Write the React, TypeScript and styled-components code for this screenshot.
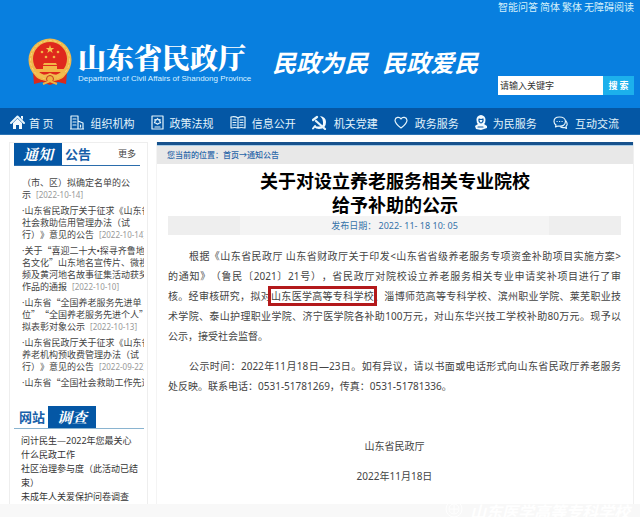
import React from "react";
import styled, { createGlobalStyle, css } from "styled-components";

const sans = `"Noto Sans", "Noto Sans CJK SC", sans-serif`;
const cjk = `"Noto Sans CJK SC", sans-serif`;

const GlobalStyle = createGlobalStyle`
  * { box-sizing: border-box; }
  body { margin: 0; background: #fff; color: #444; font-family: ${sans}; text-spacing-trim: space-all; }
  h1, h2, p, ul { margin: 0; padding: 0; }
  ul { list-style: none; }
  a { color: inherit; text-decoration: none; }
`;

const Page = styled.div`
  min-height: 100vh;
  display: flex;
  flex-direction: column;
  overflow: hidden;
`;

const Header = styled.header`
  background: #087fdf;
`;

const TopLinks = styled.nav`
  display: flex;
  justify-content: flex-end;
  gap: 2px;
  padding: 0 6px;
  font: 10px/14px ${cjk};
  color: #d4f0fb;
`;

const BrandRow = styled.div`
  display: flex;
  align-items: center;
  min-height: 94px;
  padding: 14px 6px 13px 28px;
`;

const Brand = styled.a`
  display: flex;
  align-items: center;
  gap: 6px;
`;

const BrandText = styled.div`
  padding-top: 3px;
  color: #fff;
  white-space: nowrap;
`;

const BrandName = styled.div`
  font: 900 28px/32px "Noto Serif CJK SC", "Noto Sans CJK SC", serif;
`;

const BrandEnglish = styled.div`
  font: 8px/12px "Liberation Sans", sans-serif;
  color: #d9f1ff;
`;

const Slogan = styled.div`
  display: flex;
  gap: 14px;
  margin-left: 21px;
  font: italic 700 24px/30px ${cjk};
  color: #fff;
  white-space: nowrap;
`;

const Search = styled.form`
  display: flex;
  align-self: flex-end;
  margin-left: auto;
  height: 19px;
`;

const SearchInput = styled.input`
  width: 105px;
  border: 0;
  border-radius: 0;
  padding: 0 2px;
  background: #fff;
  font: 9px ${cjk};
  color: #333;
  &::placeholder { color: #333; opacity: 1; }
`;

const SearchButton = styled.button`
  width: 31px;
  border: 0;
  padding: 0;
  background: #1cb0ec;
  color: #fff;
  font: bold 9px ${cjk};
`;

const MainNav = styled.nav`
  display: flex;
  justify-content: space-between;
  align-items: center;
  min-height: 27px;
  padding: 3px 21px 0 10px;
  background: #0457a5;
  border-bottom: 1px solid #2c74b5;
`;

const NavItem = styled.a<{ $gap: number }>`
  display: flex;
  align-items: center;
  gap: ${(p) => p.$gap}px;
  font: 11px/20px ${cjk};
  color: #e2f3fb;
  white-space: nowrap;
`;

const Columns = styled.div`
  flex: 1;
  display: grid;
  grid-template-columns: 139px minmax(0, 1fr);
  gap: 8px;
  padding: 7px 6px 0 9px;
`;

const Sidebar = styled.aside`
  border: 1px solid #eee;
  border-bottom: 0;
  padding: 0 3px 0 4px;
`;

const PanelHead = styled.div<{ $tone: string; $inset?: boolean }>`
  display: flex;
  align-items: center;
  height: 23px;
  gap: 3px;
  margin-right: ${(p) => (p.$inset ? 0 : 4)}px;
  padding-left: ${(p) => (p.$inset ? 5 : 0)}px;
  border-bottom: 1px solid ${(p) => p.$tone};
`;

const Plate = styled.span`
  align-self: stretch;
  width: 48px;
  background: #0457a5;
  color: #fff;
  font: italic bold 15px/21px "Noto Serif CJK SC", "Noto Sans CJK SC", serif;
  text-align: center;
`;

const PanelWord = styled.span`
  font: bold 13px/22px ${cjk};
  color: #175fa9;
`;

const More = styled.a`
  margin: 0 4px 0 auto;
  font: 9px/20px ${cjk};
  color: #444;
`;

const Notices = styled.ul`
  display: flex;
  flex-direction: column;
  gap: 4px;
  margin: 11px 0 17px;
  padding-left: 8px;
  overflow: hidden;
`;

const Notice = styled.li`
  font: 9px/12px ${cjk};
  white-space: nowrap;
  time {
    margin-left: 3px;
    font: 8px/11px ${sans};
    color: #999;
  }
`;

const Dot = styled.span`
  font-family: ${sans};
  line-height: 1;
`;

const Line = styled.span<{ $justify?: boolean; $indent?: boolean }>`
  display: block;
  ${(p) => p.$justify && css`text-align-last: justify;`}
  ${(p) => p.$indent && css`text-indent: 21px;`}
`;

const Surveys = styled.ul`
  padding: 5px 0 0 7px;
`;

const Survey = styled.li`
  font: 9px/14px ${sans};
  color: #333;
  white-space: nowrap;
`;

const Article = styled.main`
  border-right: 1px solid #f0f0f0;
  border-left: 1px solid #f4f4f4;
`;

const Crumbs = styled.nav`
  border-top: 3px solid #17528d;
  background: #e8e8e8;
  box-shadow: inset 0 1px #a9cde8;
  padding: 0 10px;
  font: 500 8px/19px ${cjk};
  color: #2a66a8;
`;

const Title = styled.h1`
  padding-top: 4px;
  font: bold 18px/24px ${cjk};
  color: #000;
  text-align: center;
`;

const PublishDate = styled.div`
  margin: 0 12px 11px 11px;
  background: linear-gradient(90deg, #eee 16%, #f4f4f4 16% 84%, #eee 84%);
  font: 9px/19px ${sans};
  color: #3472a8;
  text-align: center;
`;

const Body = styled.div`
  display: flex;
  flex-direction: column;
  gap: 10px;
  margin: 0 12px 16px 11px;
  font: 10px/20px ${sans};
`;

const Sign = styled.p<{ $first?: boolean }>`
  margin-top: ${(p) => (p.$first ? 30 : 0)}px;
  text-align: center;
`;

const Highlight = styled.mark`
  background: none;
  color: inherit;
  outline: 3px solid #b3191b;
`;

const Footer = styled.footer`
  display: flex;
  justify-content: flex-end;
  align-items: center;
  gap: 7px;
  height: 14px;
  padding-right: 10px;
  background: #f8f8f8;
  color: #fff;
  font: italic bold 16px/14px ${cjk};
`;

function Emblem() {
  return (
    <svg width="44" height="47" viewBox="0 0 44 47" aria-label="国徽">
      <path d="M5 34 L6 46 L14 44 L22 47 L30 44 L38 46 L39 34Z" fill="#d92a1c" />
      <circle cx="22" cy="22" r="21.5" fill="#efb94c" />
      <circle cx="22" cy="22" r="19.5" fill="none" stroke="#f8d67a" strokeDasharray="3 2" />
      <circle cx="22" cy="21" r="17" fill="#df291d" />
      <path d="M22 7l1 3h3.200l-2.500 2 1 3-2.700-1.900-2.700 1.900 1-3-2.500-2H21z" fill="#f6c751" />
      <g fill="#f3b647">
        <circle cx="14" cy="14" r="1.300" /><circle cx="30" cy="14" r="1.300" />
        <circle cx="18" cy="19" r="1.300" /><circle cx="26" cy="19" r="1.300" />
        <path d="M16 25h12l1 2H15zM15 28h14v3h8l-3 3H10l-3-3h8z" />
      </g>
      <path d="M7 34q8 5 15 1 7 4 15-1l-3 6q-6 0-8-2-4 3-8 0-2 2-8 2z" fill="#f2bd50" />
      <circle cx="22" cy="41" r="3.500" fill="#f0b343" stroke="#c5361e" />
      <path d="M8 38q6 5 10 3M36 38q-6 5-10 3" fill="none" stroke="#f0b343" strokeWidth="1.500" />
      <path d="M15 46l7-3 7 3" fill="none" stroke="#f0b343" strokeWidth="2" />
    </svg>
  );
}

const Glyph = styled.svg`
  flex: none;
  fill: none;
  stroke: #e6f5fc;
  stroke-width: 1.2;
  stroke-linecap: round;
  stroke-linejoin: round;
`;

const solid = { fill: "#f2faff", stroke: "none" };

const navItems = [
  {
    label: "首 页", width: 15, gap: 4,
    icon: <><path d="M1 8l6.500-6.500L14 8" strokeWidth="2" /><path d="M3 8l4.500-4.500L12 8v6H9v-4H6v4H3zM11 1h2v4l-2-2z" {...solid} /></>,
  },
  {
    label: "组织机构", width: 14, gap: 7,
    icon: <path d="M1 1h7v13H1zM8 6l5 2v6H8M3 4h3M3 7h3M3 10h3M10.500 10v2M0 14h14" />,
  },
  {
    label: "政策法规", width: 13, gap: 6,
    icon: <><path d="M1 1h11v13H1zM4 12h5" /><path d="M6.500 3.500l1 1.300 1.600-.2-.3 1.600.8 1.500-1.600.5-1.500 1-1.500-1-1.600-.5.8-1.500-.3-1.600 1.600.2z" /></>,
  },
  {
    label: "信息公开", width: 16, gap: 6,
    icon: <path d="M8 3Q5 1 1 2v11q4-1 7 0 3-1 7 0V2q-4-1-7 1v10M3 5h3M3 7.500h3M3 10h3M10 5h3M10 7.500h3M10 10h3" />,
  },
  {
    label: "机关党建", width: 15, gap: 7,
    icon: <><path d="M8 1q6 1 6 6 0 7-7 7-3 0-5-2l1-1q9 2 8-4-.5-4-3-6z" {...solid} /><path d="M4 6l9 8M1 5l4-3" strokeWidth="2.200" /><path d="M3 11l-2 2.500" strokeWidth="2" /></>,
  },
  {
    label: "政务服务", width: 14, gap: 7,
    icon: <path d="M7 13Q1 8.500 1 5.200A3.200 3.200 0 0 1 7 4a3.200 3.200 0 0 1 6 1.200Q13 8.500 7 13z" />,
  },
  {
    label: "为民服务", width: 12, gap: 6,
    icon: <><path d="M6 0a4.800 4.800 0 0 1 4.500 5q0 3-1.500 4l3 2v2l-6 2-5-1-1-3 3-2q-1.500-1-1.500-4A4.500 4.500 0 0 1 6 0z" {...solid} /><path d="M4 4q2 1 4 0v2q-2 4-4 0zM3 12h5" stroke="#0457a5" /></>,
  },
  {
    label: "互动交流", width: 15, gap: 7,
    icon: <><path d="M6.500 2C3 2 1 4 1 6.500 1 8 2 9.300 3 10l-.5 2L5 11q7 1 7.500-4.500C12.500 4 10 2 6.500 2z" /><path d="M13 6q1.500 2 1 4l-1 1.500.5 2-2-1q-2.500.5-4-.7M4 6.500h.2M6.500 6.500h.2M9 6.500h.2" /></>,
  },
];

const notices: { lines: string[]; date?: string }[] = [
  { lines: ["（市、区）拟确定名单的公", "示"], date: "2022-10-14" },
  { lines: ["·山东省民政厅关于征求《山东省", "社会救助信用管理办法（试", "行）》意见的公告"], date: "2022-10-14" },
  { lines: ["·关于“喜迎二十大•探寻齐鲁地", "名文化”山东地名宣传片、微视", "频及黄河地名故事征集活动获奖", "作品的通报"], date: "2022-10-10" },
  { lines: ["·山东省“全国养老服务先进单", "位”“全国养老服务先进个人”", "拟表彰对象公示"], date: "2022-10-13" },
  { lines: ["·山东省民政厅关于征求《山东省", "养老机构预收费管理办法（试", "行）》意见的公告"], date: "2022-09-22" },
  { lines: ["·山东省“全国社会救助工作先进"] },
];

const surveys = [
  ["问计民生—2022年您最关心", "什么民政工作"],
  ["社区治理参与度（此活动已结", "束）"],
  ["未成年人关爱保护问卷调查"],
];

function NoticeText({ text }: { text: string }) {
  return (
    <>
      {text.split(/([·•])/).map((part, i) =>
        part === "·" || part === "•" ? <Dot key={i}>{part}</Dot> : part,
      )}
    </>
  );
}

export default function App() {
  return (
    <Page lang="zh-CN">
      <GlobalStyle />
      <Header>
        <TopLinks>
          {["智能问答", "简体", "繁体", "无障碍阅读"].map((t) => <a href="#" key={t}>{t}</a>)}
        </TopLinks>
        <BrandRow>
          <Brand href="#">
            <Emblem />
            <BrandText>
              <BrandName>山东省民政厅</BrandName>
              <BrandEnglish>Department of Civil Affairs of Shandong Province</BrandEnglish>
            </BrandText>
          </Brand>
          <Slogan><span>民政为民</span><span>民政爱民</span></Slogan>
          <Search onSubmit={(e) => e.preventDefault()}>
            <SearchInput aria-label="请输入关键字" placeholder="请输入关键字" />
            <SearchButton>搜 索</SearchButton>
          </Search>
        </BrandRow>
      </Header>
      <MainNav>
        {navItems.map((n) => (
          <NavItem href="#" key={n.label} $gap={n.gap}>
            <Glyph width={n.width} height="15" viewBox={`0 0 ${n.width} 15`} aria-hidden>{n.icon}</Glyph>
            {n.label}
          </NavItem>
        ))}
      </MainNav>
      <Columns>
        <Sidebar>
          <PanelHead $tone="#2b6dac">
            <Plate>通知</Plate>
            <PanelWord>公告</PanelWord>
            <More href="#">更多</More>
          </PanelHead>
          <Notices>
            {notices.map((n, i) => (
              <Notice key={i}>
                <a href="#">
                  {n.lines.map((l, j) => (
                    <Line key={j}>
                      <NoticeText text={l} />
                      {n.date && j === n.lines.length - 1 && <> <time>[{n.date}]</time></>}
                    </Line>
                  ))}
                </a>
              </Notice>
            ))}
          </Notices>
          <PanelHead $tone="#8ab4d0" $inset>
            <PanelWord>网站</PanelWord>
            <Plate>调查</Plate>
          </PanelHead>
          <Surveys>
            {surveys.map((s) => (
              <Survey key={s[0]}>
                <a href="#">{s.map((l) => <Line key={l}>{l}</Line>)}</a>
              </Survey>
            ))}
          </Surveys>
        </Sidebar>
        <Article>
          <Crumbs>您当前的位置：<a href="#">首页</a>→<a href="#">通知公告</a></Crumbs>
          <Title>关于对设立养老服务相关专业院校<br />给予补助的公示</Title>
          <PublishDate>发布日期： 2022- 11- 18 10: 05</PublishDate>
          <Body>
            <p>
              <Line $justify $indent>根据《山东省民政厅 山东省财政厅关于印发&lt;山东省省级养老服务专项资金补助项目实施方案&gt;</Line>
              <Line $justify>的通知》（鲁民〔2021〕21号），省民政厅对院校设立养老服务相关专业申请奖补项目进行了审</Line>
              <Line $justify>核。经审核研究，拟对<Highlight>山东医学高等专科学校</Highlight>、淄博师范高等专科学校、滨州职业学院、莱芜职业技</Line>
              <Line $justify>术学院、泰山护理职业学院、济宁医学院各补助100万元，对山东华兴技工学校补助80万元。现予以</Line>
              <Line>公示，接受社会监督。</Line>
            </p>
            <p>
              <Line $justify $indent>公示时间：2022年11月18日—23日。如有异议，请以书面或电话形式向山东省民政厅养老服务</Line>
              <Line>处反映。联系电话：0531-51781269，传真：0531-51781336。</Line>
            </p>
            <Sign $first>山东省民政厅</Sign>
            <Sign>2022年11月18日</Sign>
          </Body>
        </Article>
      </Columns>
      <Footer>
        <svg width="18" height="14" viewBox="0 0 18 14" fill="none" stroke="#fff" aria-hidden>
          <circle cx="9" cy="5" r="8" />
          <circle cx="9" cy="5" r="5" />
          <path d="M5 5h8M9 1v8" />
        </svg>
        山东医学高等专科学校
      </Footer>
    </Page>
  );
}
